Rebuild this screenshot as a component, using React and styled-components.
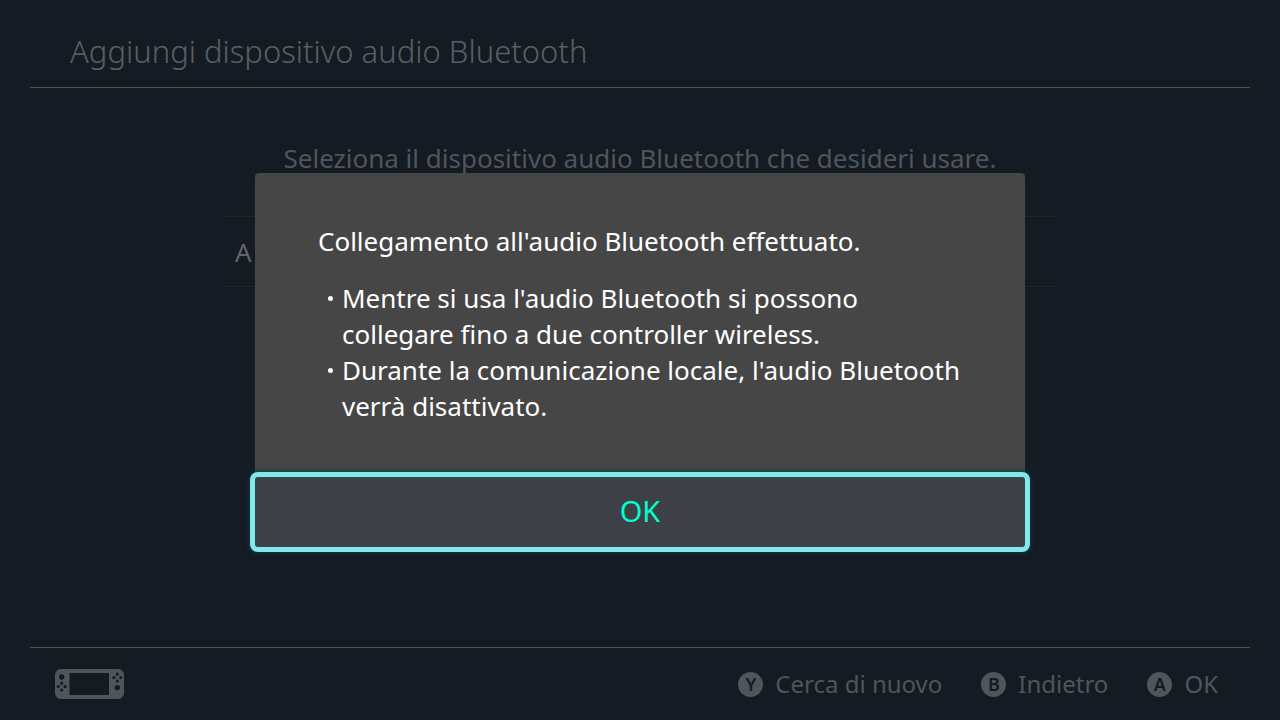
import React from 'react';
import styled, { createGlobalStyle } from 'styled-components';

const hints = [
	{ key: 'Y', label: 'Cerca di nuovo' },
	{ key: 'B', label: 'Indietro' },
	{ key: 'A', label: 'OK' },
];

const notes = [
	"Mentre si usa l'audio Bluetooth si possono collegare fino a due controller wireless.",
	"Durante la comunicazione locale, l'audio Bluetooth verrà disattivato.",
];

const ConsoleIcon = () => (
	<svg width="69" height="30" viewBox="0 0 69 30" aria-hidden="true">
		<path
			fill="currentColor"
			fillRule="evenodd"
			d="M6 0h57a6 6 0 0 1 6 6v18a6 6 0 0 1-6 6H6a6 6 0 0 1-6-6V6a6 6 0 0 1 6-6zM14.5 4v22h39.5V4z"
		/>
		<g fill="#151b22">
			<circle cx="6.7" cy="8" r="2.7" />
			<circle cx="6.7" cy="14.2" r="1.6" />
			<circle cx="6.7" cy="21" r="1.6" />
			<circle cx="3.3" cy="17.6" r="1.6" />
			<circle cx="10.1" cy="17.6" r="1.6" />
			<circle cx="62.3" cy="5.2" r="1.6" />
			<circle cx="62.3" cy="12" r="1.6" />
			<circle cx="58.9" cy="8.6" r="1.6" />
			<circle cx="65.7" cy="8.6" r="1.6" />
			<circle cx="62.3" cy="18.6" r="2.7" />
		</g>
	</svg>
);

const App = () => {
	return (
		<>
			<GlobalStyle />
			<Screen>
				<Header>
					<Title>Aggiungi dispositivo audio Bluetooth</Title>
				</Header>

				<Content>
					<Prompt>Seleziona il dispositivo audio Bluetooth che desideri usare.</Prompt>
					<Device type="button">A</Device>
				</Content>

				<Footer>
					<ConsoleIcon />
					<Hints>
						{hints.map((item) => (
							<Hint type="button" key={item.key}>
								<Key>{item.key}</Key>
								{item.label}
							</Hint>
						))}
					</Hints>
				</Footer>
			</Screen>

			<Overlay>
				<Dialog role="dialog" aria-modal="true" aria-labelledby="dialog-message">
					<DialogBody>
						<Message id="dialog-message">Collegamento all'audio Bluetooth effettuato.</Message>
						<Notes>
							{notes.map((note) => (
								<Note key={note}>{note}</Note>
							))}
						</Notes>
					</DialogBody>
					<Confirm type="button">OK</Confirm>
				</Dialog>
			</Overlay>
		</>
	);
};

export default App;

const GlobalStyle = createGlobalStyle`
	* {
		box-sizing: border-box;
	}

	body {
		margin: 0;
		background: #151b22;
		color: #50555b;
		font-family: 'Noto Sans', 'Open Sans', sans-serif;
		font-weight: 400;
	}

	button {
		border: 0;
		background: none;
		color: inherit;
		font: inherit;
		cursor: pointer;
	}
`;

const Screen = styled.div`
	display: flex;
	flex-direction: column;
	min-height: 100vh;
	padding: 0 30px;
`;

const Header = styled.header`
	padding: 29px 40px 14px;
	border-bottom: 1px solid #50555b;
`;

const Title = styled.h1`
	margin: 0;
	color: #5a5f65;
	font-size: 31px;
	font-weight: 300;
	line-height: 44px;
`;

const Content = styled.main`
	flex: 1;
	width: 100%;
	max-width: 832px;
	margin: 0 auto;
	padding-top: 52px;
`;

const Prompt = styled.p`
	margin: 0 0 40px;
	font-size: 26px;
	line-height: 36px;
	text-align: center;
`;

const Device = styled.button`
	display: block;
	width: 100%;
	height: 71px;
	padding: 0 11px;
	border-top: 1px solid #20262c;
	border-bottom: 1px solid #20262c;
	color: #62666b;
	font-size: 26px;
	text-align: left;
`;

const Footer = styled.footer`
	display: flex;
	align-items: center;
	justify-content: space-between;
	height: 73px;
	padding: 0 32px 0 25px;
	border-top: 1px solid #50555b;
`;

const Hints = styled.div`
	display: flex;
	gap: 39px;
`;

const Hint = styled.button`
	display: flex;
	align-items: center;
	gap: 12px;
	padding: 0;
	font-size: 24px;
	line-height: 36px;
`;

const Key = styled.span`
	width: 25px;
	height: 25px;
	border-radius: 50%;
	background: #50555b;
	color: #151b22;
	font-size: 18px;
	font-weight: 600;
	line-height: 25px;
	text-align: center;
`;

const Overlay = styled.div`
	position: fixed;
	inset: 0;
	display: flex;
	align-items: center;
	justify-content: center;
`;

const Dialog = styled.section`
	width: 770px;
	max-width: 90%;
	border-radius: 4px;
	background: #464646;
	color: #fff;
	font-size: 26px;
	line-height: 36px;
`;

const DialogBody = styled.div`
	padding: 50px 60px 53px 63px;
`;

const Message = styled.p`
	margin: 0 0 21px;
`;

const Notes = styled.ul`
	margin: 0;
	padding: 0;
	list-style: none;
`;

const Note = styled.li`
	display: flex;

	&::before {
		content: '';
		flex: none;
		width: 5px;
		height: 5px;
		margin: 16px 9px 0 10px;
		border-radius: 50%;
		background: #fff;
	}
`;

const Confirm = styled.button`
	display: block;
	width: 100%;
	height: 70px;
	padding: 0 0 2px;
	border-radius: 3px;
	background: #3d4047;
	box-shadow: 0 0 0 5px #7ee8ec, 0 0 5px 6px #0d3a40;
	color: #0fc;
	font-size: 29px;
`;
